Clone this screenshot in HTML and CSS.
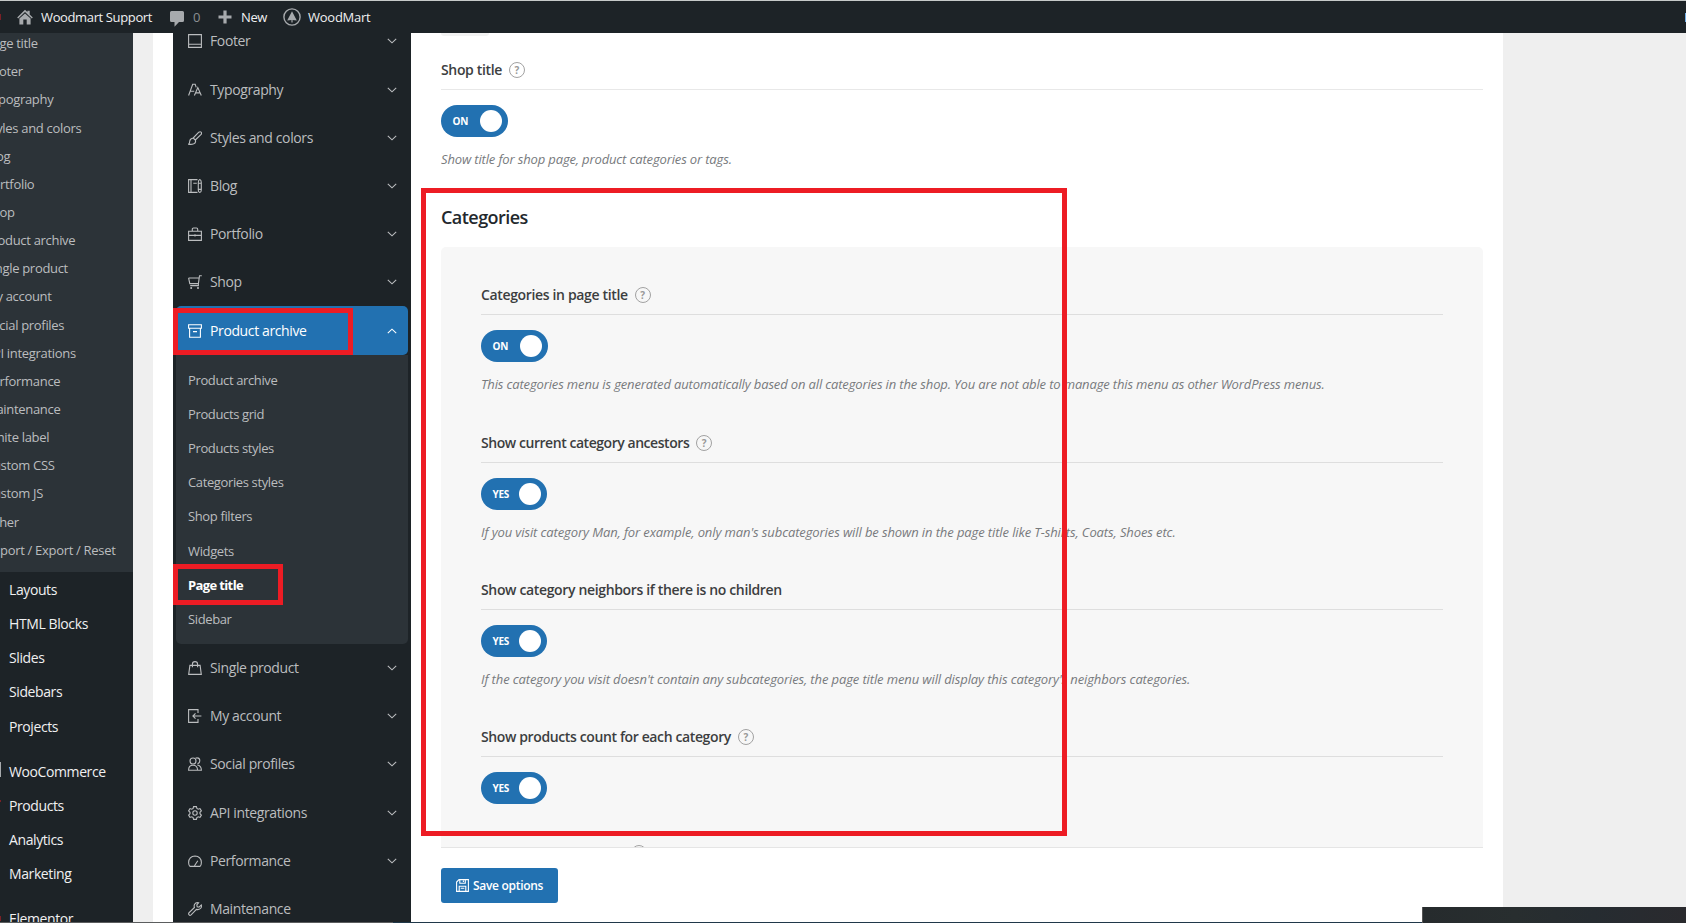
FILE: index.html
```html
<!DOCTYPE html>
<html lang="en">
<head>
<meta charset="utf-8">
<title>WoodMart theme settings</title>
<link rel="stylesheet" href="styles.css">
</head>
<body>
<svg class="defs" width="0" height="0">
  <symbol id="down" viewBox="0 0 10 6"><path d="M.8.8 5 4.8 9.2.8"/></symbol>
  <symbol id="up" viewBox="0 0 10 6"><path d="M.8 5.2 5 1.2 9.2 5.2"/></symbol>
</svg>
<header class="adminbar">
  <a class="bar-item site"><svg width="16" height="16" viewBox="0 0 16 16"><path class="solid" d="M8 .8 10.4 3.100V1.700h2.300v3.700L15.800 8.600l-1 .9L8 3.100 1.200 9.500l-1-.9zM8 4.400l5.600 5.200V15.500H9.700V10.600H6.300v4.900H2.400V9.600z"/></svg>Woodmart Support</a>
  <a class="bar-item comments"><svg width="14" height="16" viewBox="0 0 14 16"><path class="solid" d="M1.500 0h11Q14 0 14 1.500v8q0 1.500-1.500 1.500H9L4.500 15.700V11h-3Q0 11 0 9.500v-8Q0 0 1.500 0z"/></svg><span class="count">0</span></a>
  <a class="bar-item new"><svg width="14" height="14" viewBox="0 0 14 14"><path class="solid" d="M5.400.5h3.200v4.900h4.900v3.200H8.600v4.900H5.400V8.600H.5V5.400h4.900z"/></svg>New</a>
  <a class="bar-item theme"><svg width="18" height="18" viewBox="0 0 18 18"><circle cx="9" cy="9" r="8.100" fill="none" stroke="#a7aaad" stroke-width="1.400"/><path class="solid" d="M9 3.200 13.800 12.400 9.600 12V14.500H8.400V12L4.200 12.400z"/></svg>WoodMart</a>
</header>

<div class="workspace">
  <aside class="wp-menu">
    <ul class="wp-sub">
      <li>Page title</li><li>Footer</li><li>Typography</li><li>Styles and colors</li><li>Blog</li><li>Portfolio</li><li>Shop</li><li>Product archive</li><li>Single product</li><li>My account</li><li>Social profiles</li><li>API integrations</li><li>Performance</li><li>Maintenance</li><li>White label</li><li>Custom CSS</li><li>Custom JS</li><li>Other</li><li>Import / Export / Reset</li>
    </ul>
    <ul class="wp-main">
      <li>Layouts</li><li>HTML Blocks</li><li>Slides</li><li>Sidebars</li><li>Projects</li>
      <li class="group">WooCommerce</li><li>Products</li><li>Analytics</li><li>Marketing</li>
      <li class="group">Elementor</li>
    </ul>
  </aside>

  <main class="panel">
    <nav class="options-nav">
      <a class="nav-row"><svg class="icon" viewBox="0 0 14 14"><path d="M.6.6h12.800v12.800H.6zM.6 10.300h12.800"/></svg><span>Footer</span><svg class="chev"><use href="#down"/></svg></a>
      <a class="nav-row"><svg class="icon" viewBox="0 0 14 14"><path d="M.6 12.500 4.700 1.300h2.500l1 3M2.200 8.200h4M6.400 12.500 9.800 4.600l3.500 7.900M7.500 9.900h4.700"/></svg><span>Typography</span><svg class="chev"><use href="#down"/></svg></a>
      <a class="nav-row"><svg class="icon" viewBox="0 0 14 14"><path d="M5.200 7 10.800 1.200q1.400-1 2.300 0t0 2.200L7.300 9M5.200 7 7.300 9q1 2.700-1.500 3.800-2.300.9-5.200.4 1.200-.8 1.100-2.900Q2 7.400 5.200 7z"/></svg><span>Styles and colors</span><svg class="chev"><use href="#down"/></svg></a>
      <a class="nav-row"><svg class="icon" viewBox="0 0 14 14"><path d="M9.500 13.400H.6V.6h8.900M3 .6v12.800M5.300 4.300h3.500M10.300 3.500q0-2.300 1.500-2.900 1.500.6 1.500 2.900v7.400q0 2.300-1.500 2.500-1.500-.2-1.500-2.500zM10.300 4.300h3M10.300 10.400h3"/></svg><span>Blog</span><svg class="chev"><use href="#down"/></svg></a>
      <a class="nav-row"><svg class="icon" viewBox="0 0 14 14"><path d="M.6 4.200h12.800v9.200H.6zM.6 8.400h12.800M7 7.300v2.300M4.300 4.200V2.200Q4.300 1 5.500 1h3Q9.700 1 9.700 2.200v2"/></svg><span>Portfolio</span><svg class="chev"><use href="#down"/></svg></a>
      <a class="nav-row"><svg class="icon" viewBox="0 0 14 14"><path d="M.6 3h10.600M.6 3l1.200 5.600h8.600L11.500.7h2.300M10.400 8.600v2H2.200"/><circle class="dot" cx="3.200" cy="12.900" r="1"/><circle class="dot" cx="10" cy="12.900" r="1"/></svg><span>Shop</span><svg class="chev"><use href="#down"/></svg></a>
      <a class="nav-row active"><svg class="icon" viewBox="0 0 14 14"><path d="M.6.800h12.800v3.400H.6zM1.600 4.200h10.800v9H1.600zM5 7.600h4"/></svg><span>Product archive</span><svg class="chev"><use href="#up"/></svg></a>
      <div class="submenu">
        <a>Product archive</a><a>Products grid</a><a>Products styles</a><a>Categories styles</a><a>Shop filters</a><a>Widgets</a><a class="current">Page title</a><a>Sidebar</a>
      </div>
      <a class="nav-row"><svg class="icon" viewBox="0 0 14 14"><path d="M1.900 4.400h10.200l1.200 9H.7zM4.400 6.200V3.200Q4.400.6 7 .6t2.600 2.600v3"/></svg><span>Single product</span><svg class="chev"><use href="#down"/></svg></a>
      <a class="nav-row"><svg class="icon" viewBox="0 0 14 14"><path d="M10 4V.6H.6v12.800H10V10M13.400 7H5M7.500 4.400 4.900 7l2.600 2.600"/></svg><span>My account</span><svg class="chev"><use href="#down"/></svg></a>
      <a class="nav-row"><svg class="icon" viewBox="0 0 14 14"><circle cx="5" cy="4" r="3"/><path d="M.6 13.200q0-5 4.400-5t4.600 5zM7.500 1.300q1-.6 2-.4 2.300.3 2.300 2.800 0 2.300-2.300 3.100M9.300 8q4 .5 4.100 5.200H9.600"/></svg><span>Social profiles</span><svg class="chev"><use href="#down"/></svg></a>
      <a class="nav-row"><svg class="icon" viewBox="0 0 14 14"><path d="M5.600.6h2.800l.5 1.900 1.300.7 1.800-.6 1.400 2.300L12 6.300v1.400l1.400 1.400-1.400 2.300-1.800-.6-1.300.7-.5 1.900H5.600l-.5-1.900-1.300-.7-1.800.6L.6 9.100 2 7.700V6.300L.6 4.900 2 2.600l1.800.6 1.300-.7z"/><circle cx="7" cy="7" r="2.200"/></svg><span>API integrations</span><svg class="chev"><use href="#down"/></svg></a>
      <a class="nav-row"><svg class="icon" viewBox="0 0 14 14"><path d="M2 12.400Q.6 11 .6 8.500.9 2.300 7 2q6.100.3 6.400 6.500 0 2.500-1.400 3.900zM6.500 11.800l3.300-5"/></svg><span>Performance</span><svg class="chev"><use href="#down"/></svg></a>
      <a class="nav-row"><svg class="icon" viewBox="0 0 14 14"><path d="M10.600.8Q7.800.2 6.600 2.300q-.8 1.500-.2 3.200L.9 10.900q-.7 1.100.2 2t2-.1l5.300-5.400q3 .7 4.500-1.400.9-1.500.4-3.100L11 5.100 9.200 4.700 8.800 3z"/></svg><span>Maintenance</span></a>
    </nav>

    <section class="content">
      <div class="scroll">
        <div class="prev-control"></div>
        <div class="field">
          <h4 class="field-title">Shop title<i class="help">?</i></h4>
          <div class="switch on">ON<b class="knob"></b></div>
          <p class="desc">Show title for shop page, product categories or tags.</p>
        </div>
        <h3 class="section-title">Categories</h3>
        <div class="group-box">
          <div class="field">
            <h4 class="field-title">Categories in page title<i class="help">?</i></h4>
            <div class="switch on">ON<b class="knob"></b></div>
            <p class="desc">This categories menu is generated automatically based on all categories in the shop. You are not able to manage this menu as other WordPress menus.</p>
          </div>
          <div class="field ancestors">
            <h4 class="field-title">Show current category ancestors<i class="help">?</i></h4>
            <div class="switch">YES<b class="knob"></b></div>
            <p class="desc">If you visit category Man, for example, only man's subcategories will be shown in the page title like T-shirts, Coats, Shoes etc.</p>
          </div>
          <div class="field neighbors">
            <h4 class="field-title">Show category neighbors if there is no children</h4>
            <div class="switch">YES<b class="knob"></b></div>
            <p class="desc">If the category you visit doesn't contain any subcategories, the page title menu will display this category's neighbors categories.</p>
          </div>
          <div class="field short">
            <h4 class="field-title">Show products count for each category<i class="help">?</i></h4>
            <div class="switch">YES<b class="knob"></b></div>
          </div>
          <div class="field">
            <h4 class="field-title"><span class="blank"></span><i class="help"></i></h4>
          </div>
        </div>
      </div>
      <footer class="actions">
        <button class="save"><svg width="13" height="13" viewBox="0 0 13 13"><path d="M3 .6h9.400v11.800H.6V3zM3.800.8v3.400h5.500V.8M7.400 1.500v1.600M3.200 12.200V7.200h6.600v5M4.700 9.200h3.600"/></svg>Save options</button>
      </footer>
    </section>
  </main>
</div>

<div class="mark mark-archive"></div>
<div class="mark mark-page-title"></div>
<div class="mark mark-categories"></div>
<i class="edge edge-bar"></i><i class="edge edge-account"></i><i class="edge edge-woo"></i><i class="edge edge-products"></i><i class="edge edge-elementor"></i>
<div class="window-edge"></div>
<div class="taskbar"></div>
</body>
</html>
```
FILE: styles.css
```css
* { box-sizing: border-box; }
body {
  margin: 0; width: 1686px; height: 923px; overflow: hidden; position: relative;
  display: flex; flex-direction: column; background: #efefef;
  font: 14px/20px "Open Sans", "Noto Sans", sans-serif;
}
ul, h3, h4, p { margin: 0; padding: 0; list-style: none; }
svg { display: block; flex: none; }
.defs { position: absolute; }
.solid { fill: #a7aaad; }

.adminbar {
  flex: none; height: 33px; background: #1d2327; border-top: 1px solid #c6cac9;
  display: flex; align-items: center; padding-left: 17px;
  color: #f0f0f1; font-size: 13px; letter-spacing: -.37px;
}
.bar-item { display: flex; align-items: center; white-space: nowrap; }
.site { width: 153px; gap: 8px; }
.comments { width: 48px; gap: 9px; }
.comments svg { margin-top: 3px; }
.count { color: #8b8f92; }
.new { width: 65px; gap: 9px; }
.theme { gap: 7px; letter-spacing: -.25px; }

.workspace { flex: 1; min-height: 0; display: flex; }

.wp-menu { width: 133px; flex: none; overflow: hidden; background: #1d2327; }
.wp-sub {
  height: 539px; padding-left: 0; overflow: hidden; background: #2c3338;
  color: #bbbdbf; font-size: 13px; letter-spacing: -.31px;
}
.wp-sub li { height: 28.15px; line-height: 28.15px; margin-left: -15px; white-space: nowrap; }
.wp-sub li:first-child { margin-top: -3.9px; }
.wp-main { padding: .5px 0 0 9px; color: #f0f0f1; letter-spacing: -.4px; }
.wp-main li { height: 34.25px; line-height: 34.25px; white-space: nowrap; }
.wp-main .group { margin-top: 10.8px; }

.panel { width: 1350px; margin-left: 20px; padding-left: 20px; background: #fff; display: flex; }

.options-nav {
  width: 238px; flex: none; overflow: hidden; background: #1d2327; padding: 0 3px;
  color: #bbbdbf; letter-spacing: -.38px;
}
.nav-row { display: flex; align-items: center; height: 48.2px; padding: 0 11px 0 12px; border-radius: 5px; }
.nav-row:first-child { margin-top: -15.7px; }
.nav-row span { flex: 1; margin-left: 8px; white-space: nowrap; }
.active { height: 48.5px; background: #2271b1; color: #fff; border-radius: 5px 5px 5px 0; }
.icon { width: 14px; height: 14px; fill: none; stroke: currentColor; stroke-width: 1.1; }
.dot { fill: currentColor; stroke: none; }
.chev { width: 10px; height: 6px; fill: none; stroke: currentColor; stroke-width: 1.1; }
.submenu {
  height: 289px; padding: 8px 12px; border-radius: 0 0 5px 5px; background: #2c3338;
  font-size: 13px; letter-spacing: -.37px;
}
.submenu a { display: block; height: 34.14px; line-height: 34.14px; }
.submenu .current { color: #fff; font-weight: 700; letter-spacing: -.63px; }

.content { flex: 1; min-width: 0; padding: 0 20px 0 30px; display: flex; flex-direction: column; }
.scroll { height: 815px; overflow: hidden; border-bottom: 1px solid #e5e5e5; }
.prev-control { width: 48px; height: 3px; margin-bottom: 22px; border-radius: 0 0 4px 4px; background: #f2f2f2; }
.field { height: 147.2px; }
.short { height: 116px; }
.field-title {
  display: flex; align-items: center; height: 32px; padding-bottom: 7px; border-bottom: 1px solid #e8e8e8;
  color: #3c3e40; font-size: 14px; font-weight: 600; letter-spacing: -.35px; white-space: nowrap;
}
.group-box .field-title { border-color: #dedede; }
.ancestors .field-title { letter-spacing: -.45px; }
.short .field-title { letter-spacing: -.38px; }
.blank { width: 143px; }
.help {
  width: 16px; height: 16px; margin-left: 7px; border: 1px solid #a2a2a2; border-radius: 50%;
  color: #999; font: 700 10px/14px "Open Sans", sans-serif; text-align: center; letter-spacing: 0;
}
.switch {
  display: flex; align-items: center; justify-content: space-between;
  width: 66px; height: 32px; margin-top: 15px; padding: 0 6px 0 11.5px; border-radius: 16px;
  background: #2271b1; color: #fff; font-size: 10px; font-weight: 700; letter-spacing: -.3px;
}
.on { width: 67px; letter-spacing: -.1px; }
.knob { width: 22px; height: 22px; border-radius: 50%; background: #fff; }
.desc { margin-top: 12px; color: #777a7d; font-size: 13px; font-style: italic; letter-spacing: -.145px; white-space: nowrap; }
.ancestors .desc { letter-spacing: -.108px; }
.neighbors .desc { letter-spacing: -.116px; }
.section-title { height: 42px; color: #23282d; font-size: 18px; line-height: 24px; font-weight: 600; letter-spacing: -.55px; }
.group-box { height: 620px; padding: 36.2px 40px 0; border-radius: 5px; background: #f7f7f7; }

.actions { padding-top: 20px; }
.save {
  display: flex; align-items: center; gap: 4px; width: 117px; height: 35px; padding: 0 0 0 15px;
  border: 0; border-radius: 3px; background: #2271b1; color: #fff;
  font: 600 12px/20px "Open Sans", sans-serif; letter-spacing: -.3px; white-space: nowrap;
}
.save svg { fill: none; stroke: #fff; stroke-width: 1.1; }

.mark { position: absolute; border: 5px solid #ed1c24; }
.mark-archive { left: 173px; top: 308px; width: 180px; height: 47px; }
.mark-page-title { left: 173px; top: 564px; width: 110px; height: 41px; }
.mark-categories { left: 421px; top: 188px; width: 646px; height: 648px; }

/* slivers of items cut off by the window edges */
.edge { position: absolute; left: 0; width: 1px; }
.edge-bar { top: 14px; height: 6px; background: #7b2026; }
.edge-account { left: 1685px; top: 13px; height: 9px; background: #72aee6; }
.edge-woo { top: 762px; height: 15px; background: #a7aaad; }
.edge-products { top: 800px; height: 2px; background: #7b2026; }
.edge-elementor { top: 916px; height: 5px; background: #7b2026; }
.window-edge { position: absolute; left: 0; right: 0; top: 922px; height: 1px; background: linear-gradient(90deg, #5b5d5e 0 393px, #20384a 393px); }
.taskbar { position: absolute; left: 1422px; right: 0; top: 907px; height: 16px; border-left: 1px solid #555; background: linear-gradient(90deg, #262b2d, #282e2f 35%, #262c31 65%, #2a2a2e); }
```
